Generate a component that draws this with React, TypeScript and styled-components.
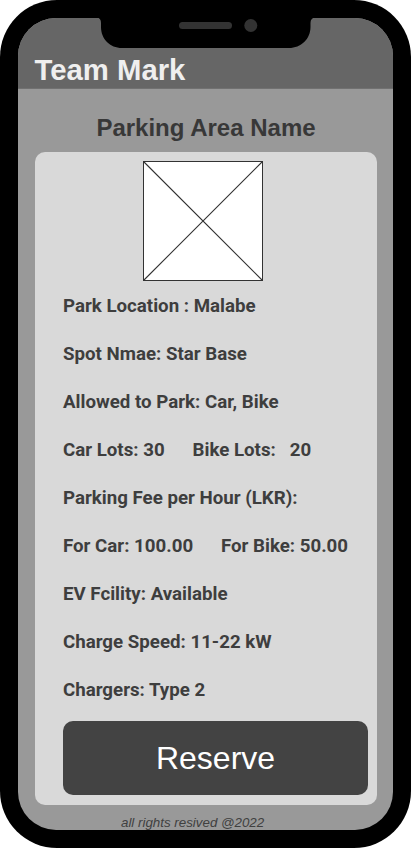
import React from 'react';
import styled, { createGlobalStyle } from 'styled-components';

const GlobalStyle = createGlobalStyle`
  * { box-sizing: border-box; }
  body { margin: 0; background: #fff; }
`;

const Phone = styled.div`
  width: 411px;
  height: 848px;
  padding: 18px;
  background: #000;
  border-radius: 57px;
  position: relative;
  overflow: hidden;
`;

const Screen = styled.div`
  height: 812px;
  border-radius: 38px;
  overflow: hidden;
  background: #999;
  display: flex;
  flex-direction: column;
  font-family: 'Liberation Sans', Arial, sans-serif;
`;

const Notch = styled.svg`
  position: absolute;
  left: 0;
  top: 0;
`;

const Header = styled.header`
  height: 71px;
  flex: none;
  background: #666;
  border-bottom: 1px solid #717171;
  padding: 35px 0 0 16.5px;
`;

const Brand = styled.h1`
  margin: 0;
  font-size: 29.3px;
  line-height: 34px;
  font-weight: 700;
  color: #efefef;
`;

const Title = styled.h2`
  margin: 25px 0 0;
  height: 38px;
  flex: none;
  padding-left: 1px;
  font-size: 24px;
  line-height: 28px;
  font-weight: 700;
  text-align: center;
  color: #383838;
`;

const Card = styled.main`
  margin: 0 16px 0 17px;
  height: 653px;
  flex: none;
  border-radius: 10px;
  background: #d9d9d9;
  padding: 9px 9px 10px 28px;
  display: flex;
  flex-direction: column;
`;

const Placeholder = styled.svg`
  margin-left: 80px;
  flex: none;
`;

const Details = styled.div`
  flex: 1;
  padding-top: 1px;
  font-family: Roboto, sans-serif;
  font-size: 18.7px;
  font-weight: 700;
  color: #3e3e3e;
`;

const Row = styled.p`
  margin: 0;
  height: 48px;
  line-height: 48px;
  white-space: pre;
`;

const Reserve = styled.button`
  height: 74px;
  flex: none;
  padding: 0;
  border: 0;
  border-radius: 10px;
  background: #434343;
  color: #fff;
  font-family: inherit;
  font-size: 32px;
`;

const Footer = styled.footer`
  flex: none;
  padding: 9px 0 0 103px;
  font-size: 13.33px;
  line-height: 18px;
  font-style: italic;
  color: #404040;
`;

const details = [
  'Park Location : Malabe',
  'Spot Nmae: Star Base',
  'Allowed to Park: Car, Bike',
  'Car Lots: 30      Bike Lots:   20',
  'Parking Fee per Hour (LKR):',
  'For Car: 100.00      For Bike: 50.00',
  'EV Fcility: Available',
  'Charge Speed: 11-22 kW',
  'Chargers: Type 2',
];

export default function App() {
  return (
    <>
      <GlobalStyle />
      <Phone>
        <Screen>
          <Header>
            <Brand>Team Mark</Brand>
          </Header>
          <Title>Parking Area Name</Title>
          <Card>
            <Placeholder width="120" height="120" viewBox="0 0 120 120">
              <rect x="0.5" y="0.5" width="119" height="119" fill="#fff" stroke="#333" />
              <path d="M0.5 0.5L119.5 119.5M119.5 0.5L0.5 119.5" stroke="#333" strokeWidth="1.1" />
            </Placeholder>
            <Details>
              {details.map((line) => (
                <Row key={line}>{line}</Row>
              ))}
            </Details>
            <Reserve>Reserve</Reserve>
          </Card>
          <Footer>all rights resived @2022</Footer>
        </Screen>
        <Notch width="411" height="50" viewBox="0 0 411 50">
          <path d="M96 17.5H97Q101 18 101 23V27C101 39 110 48 122 48H289C301 48 310.500 39 310.500 27V23Q310.500 18 315 17.500Z" fill="#000" />
          <rect x="179" y="22" width="53" height="7" rx="3.500" fill="#333" />
          <circle cx="250.800" cy="25.500" r="6.500" fill="#333" />
        </Notch>
      </Phone>
    </>
  );
}
